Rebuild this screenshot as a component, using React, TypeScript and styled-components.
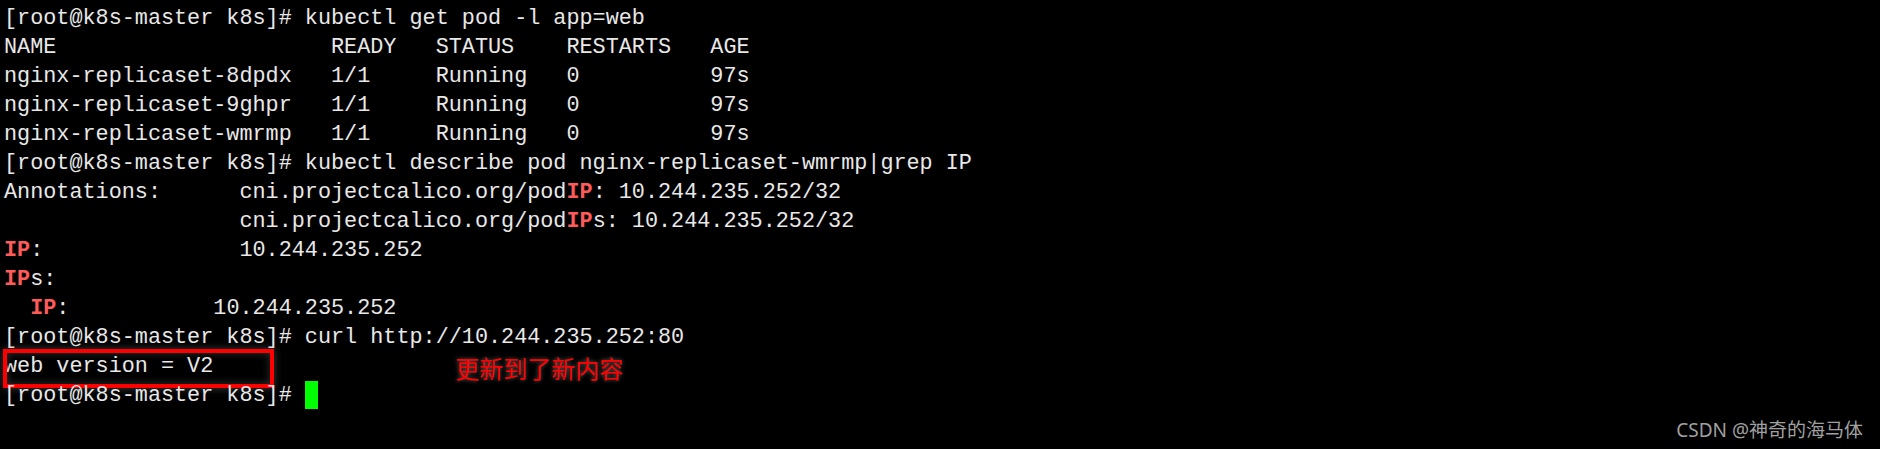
import React from "react";
import styled, { createGlobalStyle } from "styled-components";

const Global = createGlobalStyle`
  html, body { margin: 0; padding: 0; background: #000; }
  #root { height: 100vh; }
`;

const Screen = styled.div`
  display: flex;
  flex-direction: column;
  width: 100%;
  height: 449px;
  background: #000;
  overflow: hidden;
`;

const Terminal = styled.div`
  flex: 1;
  display: flex;
  flex-direction: column;
  padding: 4px 0 0 4px;
  font-family: "Liberation Mono", "DejaVu Sans Mono", monospace;
  font-size: 21.8px;
  color: #e8e8e8;
`;

const Line = styled.div`
  position: relative;
  display: flex;
  align-items: flex-start;
  gap: ${(p: { $gap?: number }) => p.$gap ?? 0}px;
  height: 29px;
  line-height: 29px;
  white-space: pre;
`;

const Hl = styled.span`
  color: #ff5a5a;
  font-weight: bold;
`;

const Cursor = styled.span`
  display: inline-block;
  width: 13px;
  height: 28px;
  background: #00ff00;
`;

const RedBox = styled.div`
  position: absolute;
  left: -1px;
  top: -3px;
  width: 271px;
  height: 39px;
  box-sizing: border-box;
  border: 4px solid #ff0000;
  box-shadow: 0 0 8px rgba(140, 140, 140, 0.45), inset 0 0 8px rgba(140, 140, 140, 0.35);
  pointer-events: none;
`;

const Note = styled.span`
  padding-top: 4px;
  font-family: "Noto Sans CJK SC", sans-serif;
  font-size: 24px;
  line-height: 24px;
  color: #ff0000;
  text-shadow: 0 0 4px rgba(150, 150, 150, 0.7);
`;

const Footer = styled.div`
  display: flex;
  justify-content: flex-end;
  padding: 0 17px 8px 0;
`;

const Watermark = styled.span`
  font-family: "Noto Sans", "Noto Sans CJK SC", sans-serif;
  font-size: 19px;
  line-height: 22px;
  color: #a0a0a0;
`;

type Seg = string | { hl: string };
const lines: Seg[][] = [
  ["[root@k8s-master k8s]# kubectl get pod -l app=web"],
  ["NAME                     READY   STATUS    RESTARTS   AGE"],
  ["nginx-replicaset-8dpdx   1/1     Running   0          97s"],
  ["nginx-replicaset-9ghpr   1/1     Running   0          97s"],
  ["nginx-replicaset-wmrmp   1/1     Running   0          97s"],
  ["[root@k8s-master k8s]# kubectl describe pod nginx-replicaset-wmrmp|grep IP"],
  ["Annotations:      cni.projectcalico.org/pod", { hl: "IP" }, ": 10.244.235.252/32"],
  ["                  cni.projectcalico.org/pod", { hl: "IP" }, "s: 10.244.235.252/32"],
  [{ hl: "IP" }, ":               10.244.235.252"],
  [{ hl: "IP" }, "s:"],
  ["  ", { hl: "IP" }, ":           10.244.235.252"],
  ["[root@k8s-master k8s]# curl http://10.244.235.252:80"],
];

const renderSegs = (segs: Seg[]) => (
  <span>
    {segs.map((s, i) =>
      typeof s === "string" ? <React.Fragment key={i}>{s}</React.Fragment> : <Hl key={i}>{s.hl}</Hl>
    )}
  </span>
);

export default function App() {
  return (
    <Screen>
      <Global />
      <Terminal>
        {lines.map((l, i) => (
          <Line key={i}>{renderSegs(l)}</Line>
        ))}
        <Line $gap={242}>
          <span>web version = V2</span>
          <Note>更新到了新内容</Note>
          <RedBox />
        </Line>
        <Line>
          <span>{"[root@k8s-master k8s]# "}</span>
          <Cursor />
        </Line>
      </Terminal>
      <Footer>
        <Watermark>CSDN @神奇的海马体</Watermark>
      </Footer>
    </Screen>
  );
}
